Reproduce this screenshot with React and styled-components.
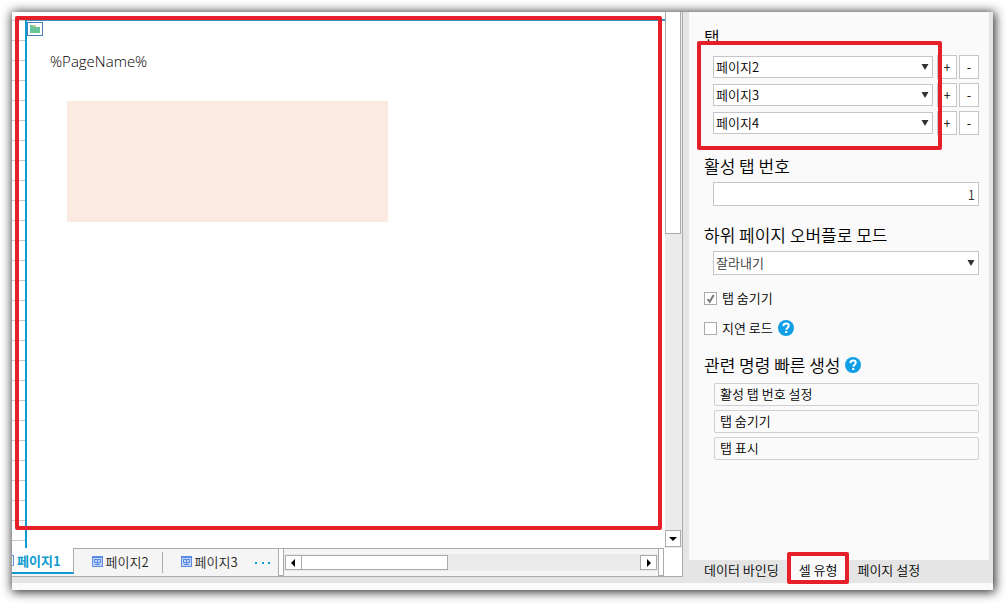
import { useState } from 'react';
import styled, { createGlobalStyle } from 'styled-components';

const RED = '#e6202a';
const BLUE = '#0f9bd0';
const LINE = '#ababab';
const FIELD_LINE = '#c6c6c6';
const GREY = '#e5e5e5';
const PANEL = '#fafafa';

const pages = ['페이지1', '페이지2', '페이지3', '페이지4'];
const commands = ['활성 탭 번호 설정', '탭 숨기기', '탭 표시'];

export default function App() {
  const [tabs, setTabs] = useState(['페이지2', '페이지3', '페이지4']);
  const [hideTabs, setHideTabs] = useState(true);
  const [lazyLoad, setLazyLoad] = useState(false);

  const changeTab = (idx, value) => setTabs(tabs.map((tab, i) => (i === idx ? value : tab)));

  return (
    <Screen>
      <GlobalStyle />
      <Window>
        <Body>
          <Editor>
            <CanvasRow>
              <Sheet>
                <RowHeaders />
                <Page>
                  <PageBadge>
                    <FolderIcon />
                  </PageBadge>
                  <PageTitle>%PageName%</PageTitle>
                  <SubPage />
                </Page>
                <SheetMark />
              </Sheet>
              <VerticalScroll>
                <VerticalThumb />
                <VerticalArrow aria-label="아래로">
                  <Arrow direction="down" />
                </VerticalArrow>
              </VerticalScroll>
            </CanvasRow>
            <BottomRow>
              <SheetTabs>
                <ActiveSheetTab>
                  <IconEdge />
                  페이지1
                </ActiveSheetTab>
                <SheetTab $divider>
                  <PageIcon />
                  페이지2
                </SheetTab>
                <SheetTab>
                  <PageIcon />
                  페이지3
                </SheetTab>
                <MoreButton aria-label="더 보기">
                  <svg width="16" height="4" viewBox="0 0 16 4" fill={BLUE}>
                    <rect x="0" y="1" width="2" height="2" />
                    <rect x="7" y="1" width="2" height="2" />
                    <rect x="13" y="1" width="2" height="2" />
                  </svg>
                </MoreButton>
              </SheetTabs>
              <Splitter />
              <HorizontalScroll>
                <ScrollButton aria-label="왼쪽으로">
                  <Arrow direction="left" />
                </ScrollButton>
                <HorizontalThumb />
                <ScrollButton aria-label="오른쪽으로">
                  <Arrow direction="right" />
                </ScrollButton>
              </HorizontalScroll>
              <Splitter />
              <Corner />
            </BottomRow>
          </Editor>

          <Side>
            <Panel>
              <Heading $gap={9}>탭</Heading>
              <TabList>
                {tabs.map((tab, idx) => (
                  <TabRow key={idx}>
                    <Dropdown
                      label={`탭 ${idx + 1}`}
                      height={22}
                      value={tab}
                      options={pages}
                      onChange={(e) => changeTab(idx, e.target.value)}
                    />
                    <SquareButtons>
                      <SquareButton>+</SquareButton>
                      <SquareButton>-</SquareButton>
                    </SquareButtons>
                  </TabRow>
                ))}
                <TabListMark />
              </TabList>

              <Section $top={22}>
                <Heading as="label" htmlFor="activeTab" $gap={7}>
                  활성 탭 번호
                </Heading>
                <Field>
                  <NumberInput id="activeTab" type="text" defaultValue="1" />
                </Field>
              </Section>

              <Section $top={20}>
                <Heading as="label" htmlFor="overflow" $gap={7}>
                  하위 페이지 오버플로 모드
                </Heading>
                <Field>
                  <Dropdown id="overflow" height={24} muted defaultValue="잘라내기" options={['잘라내기']} />
                </Field>
              </Section>

              <Checks>
                <CheckLabel>
                  <CheckBox type="checkbox" checked={hideTabs} onChange={() => setHideTabs(!hideTabs)} />
                  {hideTabs && <CheckMark />}
                  탭 숨기기
                </CheckLabel>
                <CheckLabel>
                  <CheckBox type="checkbox" checked={lazyLoad} onChange={() => setLazyLoad(!lazyLoad)} />
                  {lazyLoad && <CheckMark />}
                  지연 로드
                  <HelpIcon />
                </CheckLabel>
              </Checks>

              <Section $top={18}>
                <Heading $gap={9}>
                  관련 명령 빠른 생성
                  <HelpIcon />
                </Heading>
                <Commands>
                  {commands.map((command) => (
                    <CommandButton key={command}>{command}</CommandButton>
                  ))}
                </Commands>
              </Section>
            </Panel>
            <PanelTabs>
              <PanelTab>데이터 바인딩</PanelTab>
              <PanelTab $active>
                셀 유형
                <PanelTabMark />
              </PanelTab>
              <PanelTab>페이지 설정</PanelTab>
            </PanelTabs>
          </Side>
        </Body>
        <Footer />
      </Window>
    </Screen>
  );
}

const Dropdown = ({ label, height, muted, options, ...rest }) => (
  <SelectBox>
    <Select aria-label={label} $height={height} $muted={muted} {...rest}>
      {options.map((option) => (
        <option key={option}>{option}</option>
      ))}
    </Select>
    <SelectArrow width="8" height="6" viewBox="0 0 8 6">
      <path d="M.5 0h7L4 6z" fill="#333" />
    </SelectArrow>
  </SelectBox>
);

const arrowPaths = {
  down: 'M0 2h8L4 6z',
  left: 'M6 0v8L2 4z',
  right: 'M2 0v8l4-4z',
};

const Arrow = ({ direction }) => (
  <svg width="8" height="8" viewBox="0 0 8 8">
    <path d={arrowPaths[direction]} fill="#000" />
  </svg>
);

const FolderIcon = () => (
  <svg width="10" height="8" viewBox="0 0 10 8">
    <path d="M0 0h3v2h7v6H0z" fill="#6cc49a" />
    <path d="M3 0h3v2H3z" fill="#c9cf86" />
  </svg>
);

const PageIcon = () => (
  <svg width="11" height="11" viewBox="0 0 11 11" fill="none" stroke="#5b8be6">
    <rect x="0.5" y="0.5" width="10" height="10" fill="#c3d5f8" />
    <path d="M0 1h11" strokeWidth="2" />
    <path d="M2 3.5h7M2 6.5h7M2.5 3v4M5.5 3v6M8.5 3v4M3 8.5h5" />
  </svg>
);

// right border of the page icon that is scrolled out of the tab strip
const IconEdge = () => (
  <svg width="2" height="11" viewBox="0 0 2 11">
    <path d="M0 .5h1.5v10H0" fill="none" stroke="#5b8be6" />
  </svg>
);

const HelpIcon = () => (
  <svg width="16" height="16" viewBox="0 0 16 16">
    <circle cx="8" cy="8" r="8" fill="#0f9fe6" />
    <path
      d="M5.3 6.1C5.4 4.4 6.5 3.5 8.1 3.5s2.7.9 2.7 2.3c0 1.9-2.5 1.9-2.5 4"
      fill="none"
      stroke="#fff"
      strokeWidth="1.9"
    />
    <rect x="7.2" y="11" width="2.1" height="2" fill="#fff" />
  </svg>
);

const CheckMark = () => (
  <CheckSvg width="13" height="13" viewBox="0 0 13 13">
    <path d="M3.5 7l2.2 2.8L9.7 3" fill="none" stroke="#777" strokeWidth="2" />
  </CheckSvg>
);

const GlobalStyle = createGlobalStyle`
  * {
    box-sizing: border-box;
  }

  body {
    margin: 0;
    background: #fff;
  }

  body, button, input, select {
    font-family: 'Noto Sans CJK KR', sans-serif;
    font-size: 13px;
    font-weight: 350;
    line-height: 20px;
    color: #000;
  }

  button {
    padding: 0;
    white-space: nowrap;
    cursor: pointer;
  }

  svg {
    display: block;
    flex: none;
  }
`;

const Screen = styled.div`
  min-height: 100vh;
  padding: 12px 13px 13px 12px;
  display: flex;
`;

const Window = styled.main`
  flex: 1;
  display: flex;
  flex-direction: column;
  background: ${GREY};
  box-shadow: 1px 1px 10px 1px rgba(0, 0, 0, 0.85);
`;

const Body = styled.div`
  flex: 1;
  display: flex;
`;

const Footer = styled.footer`
  height: 7px;
  background: ${PANEL};
`;

const Editor = styled.section`
  flex: 1;
  min-width: 0;
  margin-bottom: 6px;
  display: flex;
  flex-direction: column;
  background: #fff;
  border-right: 1px solid ${LINE};
  border-bottom: 1px solid ${LINE};
`;

const CanvasRow = styled.div`
  flex: 1;
  display: flex;
`;

const Sheet = styled.div`
  position: relative;
  flex: 1;
  display: flex;
`;

const RowHeaders = styled.div`
  width: 13px;
  margin-bottom: 4px;
  background: repeating-linear-gradient(#fff 0 19px, #d0c9cb 19px 20px) 0 -11px / 100% 20px;
`;

const Page = styled.div`
  flex: 1;
  margin-top: 7px;
  border-top: 2px solid #3a8fbd;
  border-left: 2px solid ${BLUE};
`;

const PageBadge = styled.div`
  width: 16px;
  height: 14px;
  margin-top: 1px;
  display: flex;
  align-items: center;
  justify-content: center;
  background: #fff;
  border: 1px solid #4a7fbb;
`;

const PageTitle = styled.div`
  margin: 15px 0 0 23px;
  font-family: 'Open Sans', sans-serif;
  font-size: 15px;
  font-weight: 300;
  color: #000;
`;

const SubPage = styled.div`
  width: 321px;
  max-width: 80%;
  height: 121px;
  margin: 30px 0 0 40px;
  background: #fbeae1;
`;

const Mark = styled.div`
  position: absolute;
  border: 4px solid ${RED};
  border-radius: 2px;
  pointer-events: none;
`;

const SheetMark = styled(Mark)`
  inset: 4px 3px 18px 3px;
`;

const TabListMark = styled(Mark)`
  inset: -14px 37px -15px -16px;
`;

const PanelTabMark = styled(Mark)`
  inset: -8px 0 -1px 0;
`;

const VerticalScroll = styled.div`
  width: 17px;
  display: flex;
  flex-direction: column;
  justify-content: space-between;
  background: #ebebeb;
`;

const VerticalThumb = styled.div`
  width: 16px;
  height: 222px;
  background: #fff;
  border: 1px solid ${LINE};
  border-top: 0;
`;

const ScrollButton = styled.button`
  width: 17px;
  height: 15px;
  display: flex;
  align-items: center;
  justify-content: center;
  background: #fff;
  border: 1px solid ${LINE};
`;

const VerticalArrow = styled(ScrollButton)`
  width: 16px;
  height: 17px;
  margin-bottom: 1px;
`;

const BottomRow = styled.div`
  height: 28px;
  display: flex;
`;

const SheetTabs = styled.div`
  display: flex;
  background: #f5f5f5;
`;

const SheetTab = styled.button`
  position: relative;
  display: flex;
  align-items: center;
  gap: 3px;
  padding: 0 14px 2px 18px;
  border: 0;
  border-top: 1px solid ${LINE};
  background: #f5f5f5;
  color: #222;

  &::after {
    content: '';
    display: ${({ $divider }) => ($divider ? 'block' : 'none')};
    position: absolute;
    top: 3px;
    right: 0;
    height: 21px;
    border-right: 1px solid ${LINE};
  }
`;

const ActiveSheetTab = styled.button`
  height: 26px;
  display: flex;
  align-items: center;
  gap: 3px;
  padding: 1px 12px 0 0;
  font-weight: 700;
  color: ${BLUE};
  background: #fff;
  border: 0;
  border-right: 1px solid ${LINE};
  border-bottom: 2px solid ${BLUE};
`;

const MoreButton = styled.button`
  display: flex;
  align-items: center;
  padding: 0 7px 0 3px;
  border: 0;
  border-top: 1px solid ${LINE};
  background: #f5f5f5;
`;

const Splitter = styled.div`
  width: 6px;
  height: 28px;
  background: #fff;
  border: 1px solid ${LINE};
`;

const HorizontalScroll = styled.div`
  flex: 1;
  display: flex;
  align-items: center;
  padding: 0 1px;
  border-top: 1px solid ${LINE};
  background: linear-gradient(#f5f5f5 0 5px, #ebebeb 5px 22px, #f5f5f5 22px);
`;

const HorizontalThumb = styled.div`
  width: 146px;
  height: 15px;
  margin-right: auto;
  background: #fff;
  border: 1px solid ${LINE};
  border-left: 0;
`;

const Corner = styled.div`
  width: 18px;
  background: #fff;
`;

const Side = styled.aside`
  width: 310px;
  padding: 0 4px 0 6px;
  display: flex;
  flex-direction: column;
`;

const Panel = styled.div`
  flex: 1;
  padding: 16px 10px 16px 15px;
  background: ${PANEL};
`;

const Section = styled.section`
  margin-top: ${({ $top }) => $top}px;
`;

const Heading = styled.div`
  display: flex;
  align-items: center;
  gap: 4px;
  margin-bottom: ${({ $gap }) => $gap}px;
  font-size: 17px;
  line-height: 18px;
`;

const TabList = styled.div`
  position: relative;
  margin-left: 9px;
  display: flex;
  flex-direction: column;
  gap: 4px;
`;

const TabRow = styled.div`
  height: 24px;
  display: flex;
  align-items: center;
  gap: 4px;
`;

const Field = styled.div`
  margin-left: 9px;
`;

const SelectBox = styled.div`
  position: relative;
  flex: 1;
`;

const Select = styled.select`
  display: block;
  width: 100%;
  height: ${({ $height }) => $height}px;
  padding: 0 16px 0 2px;
  appearance: none;
  color: ${({ $muted }) => ($muted ? '#333' : '#000')};
  background: #fff;
  border: 1px solid ${FIELD_LINE};
  border-radius: 0;
`;

const SelectArrow = styled.svg`
  position: absolute;
  top: calc(50% - 3px);
  right: 4px;
  pointer-events: none;
`;

const SquareButtons = styled.div`
  display: flex;
  gap: 2px;
`;

const SquareButton = styled.button`
  width: 20px;
  height: 24px;
  background: #fff;
  border: 1px solid ${FIELD_LINE};
`;

const NumberInput = styled.input`
  display: block;
  width: 100%;
  height: 24px;
  padding: 0 3px;
  text-align: right;
  color: #333;
  background: #fff;
  border: 1px solid ${FIELD_LINE};
`;

const Checks = styled.div`
  margin-top: 13px;
  display: flex;
  flex-direction: column;
  align-items: flex-start;
  gap: 10px;
`;

const CheckLabel = styled.label`
  position: relative;
  height: 20px;
  display: flex;
  align-items: center;
  gap: 5px;
`;

const CheckBox = styled.input`
  width: 13px;
  height: 13px;
  margin: 0;
  appearance: none;
  background: #fff;
  border: 1px solid ${LINE};
`;

const CheckSvg = styled.svg`
  position: absolute;
  left: 0;
  pointer-events: none;
`;

const Commands = styled.div`
  margin-left: 10px;
  display: flex;
  flex-direction: column;
  gap: 4px;
`;

const CommandButton = styled.button`
  height: 23px;
  padding: 0 5px 2px;
  text-align: left;
  background: ${PANEL};
  border: 1px solid #d0d0d0;
  border-radius: 2px;
`;

const PanelTabs = styled.nav`
  height: 23px;
  padding-left: 7px;
  display: flex;
`;

const PanelTab = styled.button`
  position: relative;
  padding: 0 ${({ $active }) => ($active ? 12 : 8)}px 4px;
  line-height: 18px;
  border: 0;
  background: ${({ $active }) => ($active ? PANEL : 'transparent')};
`;
